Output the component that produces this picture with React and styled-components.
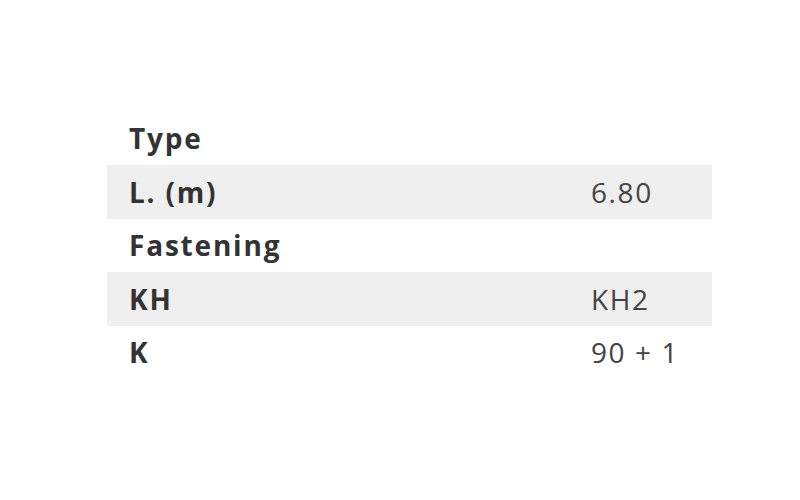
import React from "react";
import styled, { createGlobalStyle } from "styled-components";

const GlobalStyle = createGlobalStyle`
  body {
    margin: 0;
    background: #ffffff;
    font-family: "Open Sans", "Noto Sans", sans-serif;
  }
`;

const Page = styled.div`
  width: 800px;
  height: 500px;
  padding: 111.5px 0 0 107px;
  box-sizing: border-box;
`;

const Table = styled.div`
  width: 605px;
  display: flex;
  flex-direction: column;
`;

const Row = styled.div`
  display: grid;
  grid-template-columns: 462px 1fr;
  align-items: center;
  height: 53.5px;
  padding-left: 22px;
  background-color: ${(p) => (p.$shaded ? "#efefef" : "transparent")};
`;

const Label = styled.div`
  font-size: 28px;
  font-weight: 700;
  letter-spacing: 1.8px;
  color: #333333;
`;

const Value = styled.div`
  font-size: 28px;
  font-weight: 400;
  letter-spacing: 1.6px;
  color: #444444;
`;

const rows = [
  { label: "Type", value: "" },
  { label: "L. (m)", value: "6.80" },
  { label: "Fastening", value: "" },
  { label: "KH", value: "KH2" },
  { label: "K", value: "90 + 1" },
];

function App() {
  return (
    <>
      <GlobalStyle />
      <Page>
        <Table>
          {rows.map((r, i) => (
            <Row key={r.label} $shaded={i % 2 === 1}>
              <Label>{r.label}</Label>
              <Value>{r.value}</Value>
            </Row>
          ))}
        </Table>
      </Page>
    </>
  );
}

export default App;
